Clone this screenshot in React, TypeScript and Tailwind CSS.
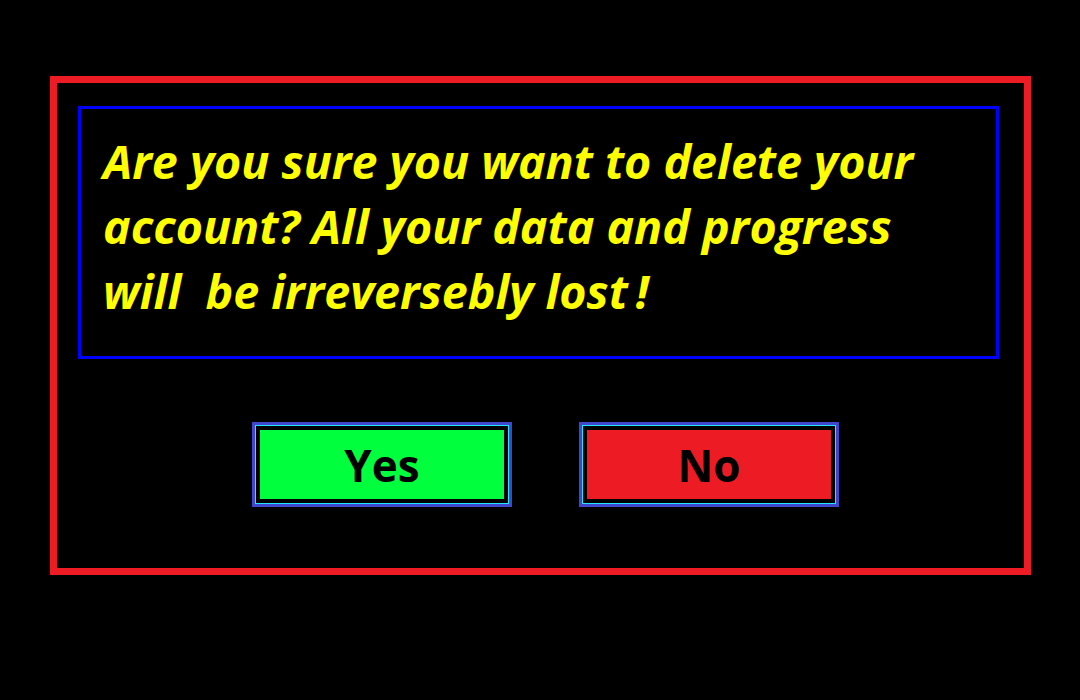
export default function App() {
  return (
    <div className="w-[1080px] h-[700px] bg-black pt-[76px] pl-[50px]">
      <div className="w-[981px] h-[499px] border-[7px] border-[#ed1c24] pt-[23px] pl-[21px]">
        <div className="w-[921px] h-[253px] border-[3px] border-[#0000ff] pl-[22px] pt-[20px]">
          <p className="font-['Open_Sans',sans-serif] font-bold italic text-[46.6px] leading-[65px] text-[#ffff00] whitespace-pre">
            Are you sure you want to delete your
            <br />
            account? All your data and progress
            <br />
            will  be irreversebly lost{'\u2009'}!
          </p>
        </div>
        <div className="flex gap-[67px] mt-[63px] ml-[174px]">
          <button className="border-[3px] border-[#3f48cc]">
            <span className="block border border-[#22e6ff]">
              <span className="flex items-center justify-center w-[252px] h-[77px] border-[4px] border-black bg-[#00ff3c] font-['Open_Sans',sans-serif] font-bold text-[44px] text-black">
                Yes
              </span>
            </span>
          </button>
          <button className="border-[3px] border-[#3f48cc]">
            <span className="block border border-[#22e6ff]">
              <span className="flex items-center justify-center w-[252px] h-[77px] border-[4px] border-black bg-[#ed1c24] font-['Open_Sans',sans-serif] font-bold text-[44px] text-black">
                No
              </span>
            </span>
          </button>
        </div>
      </div>
    </div>
  );
}
